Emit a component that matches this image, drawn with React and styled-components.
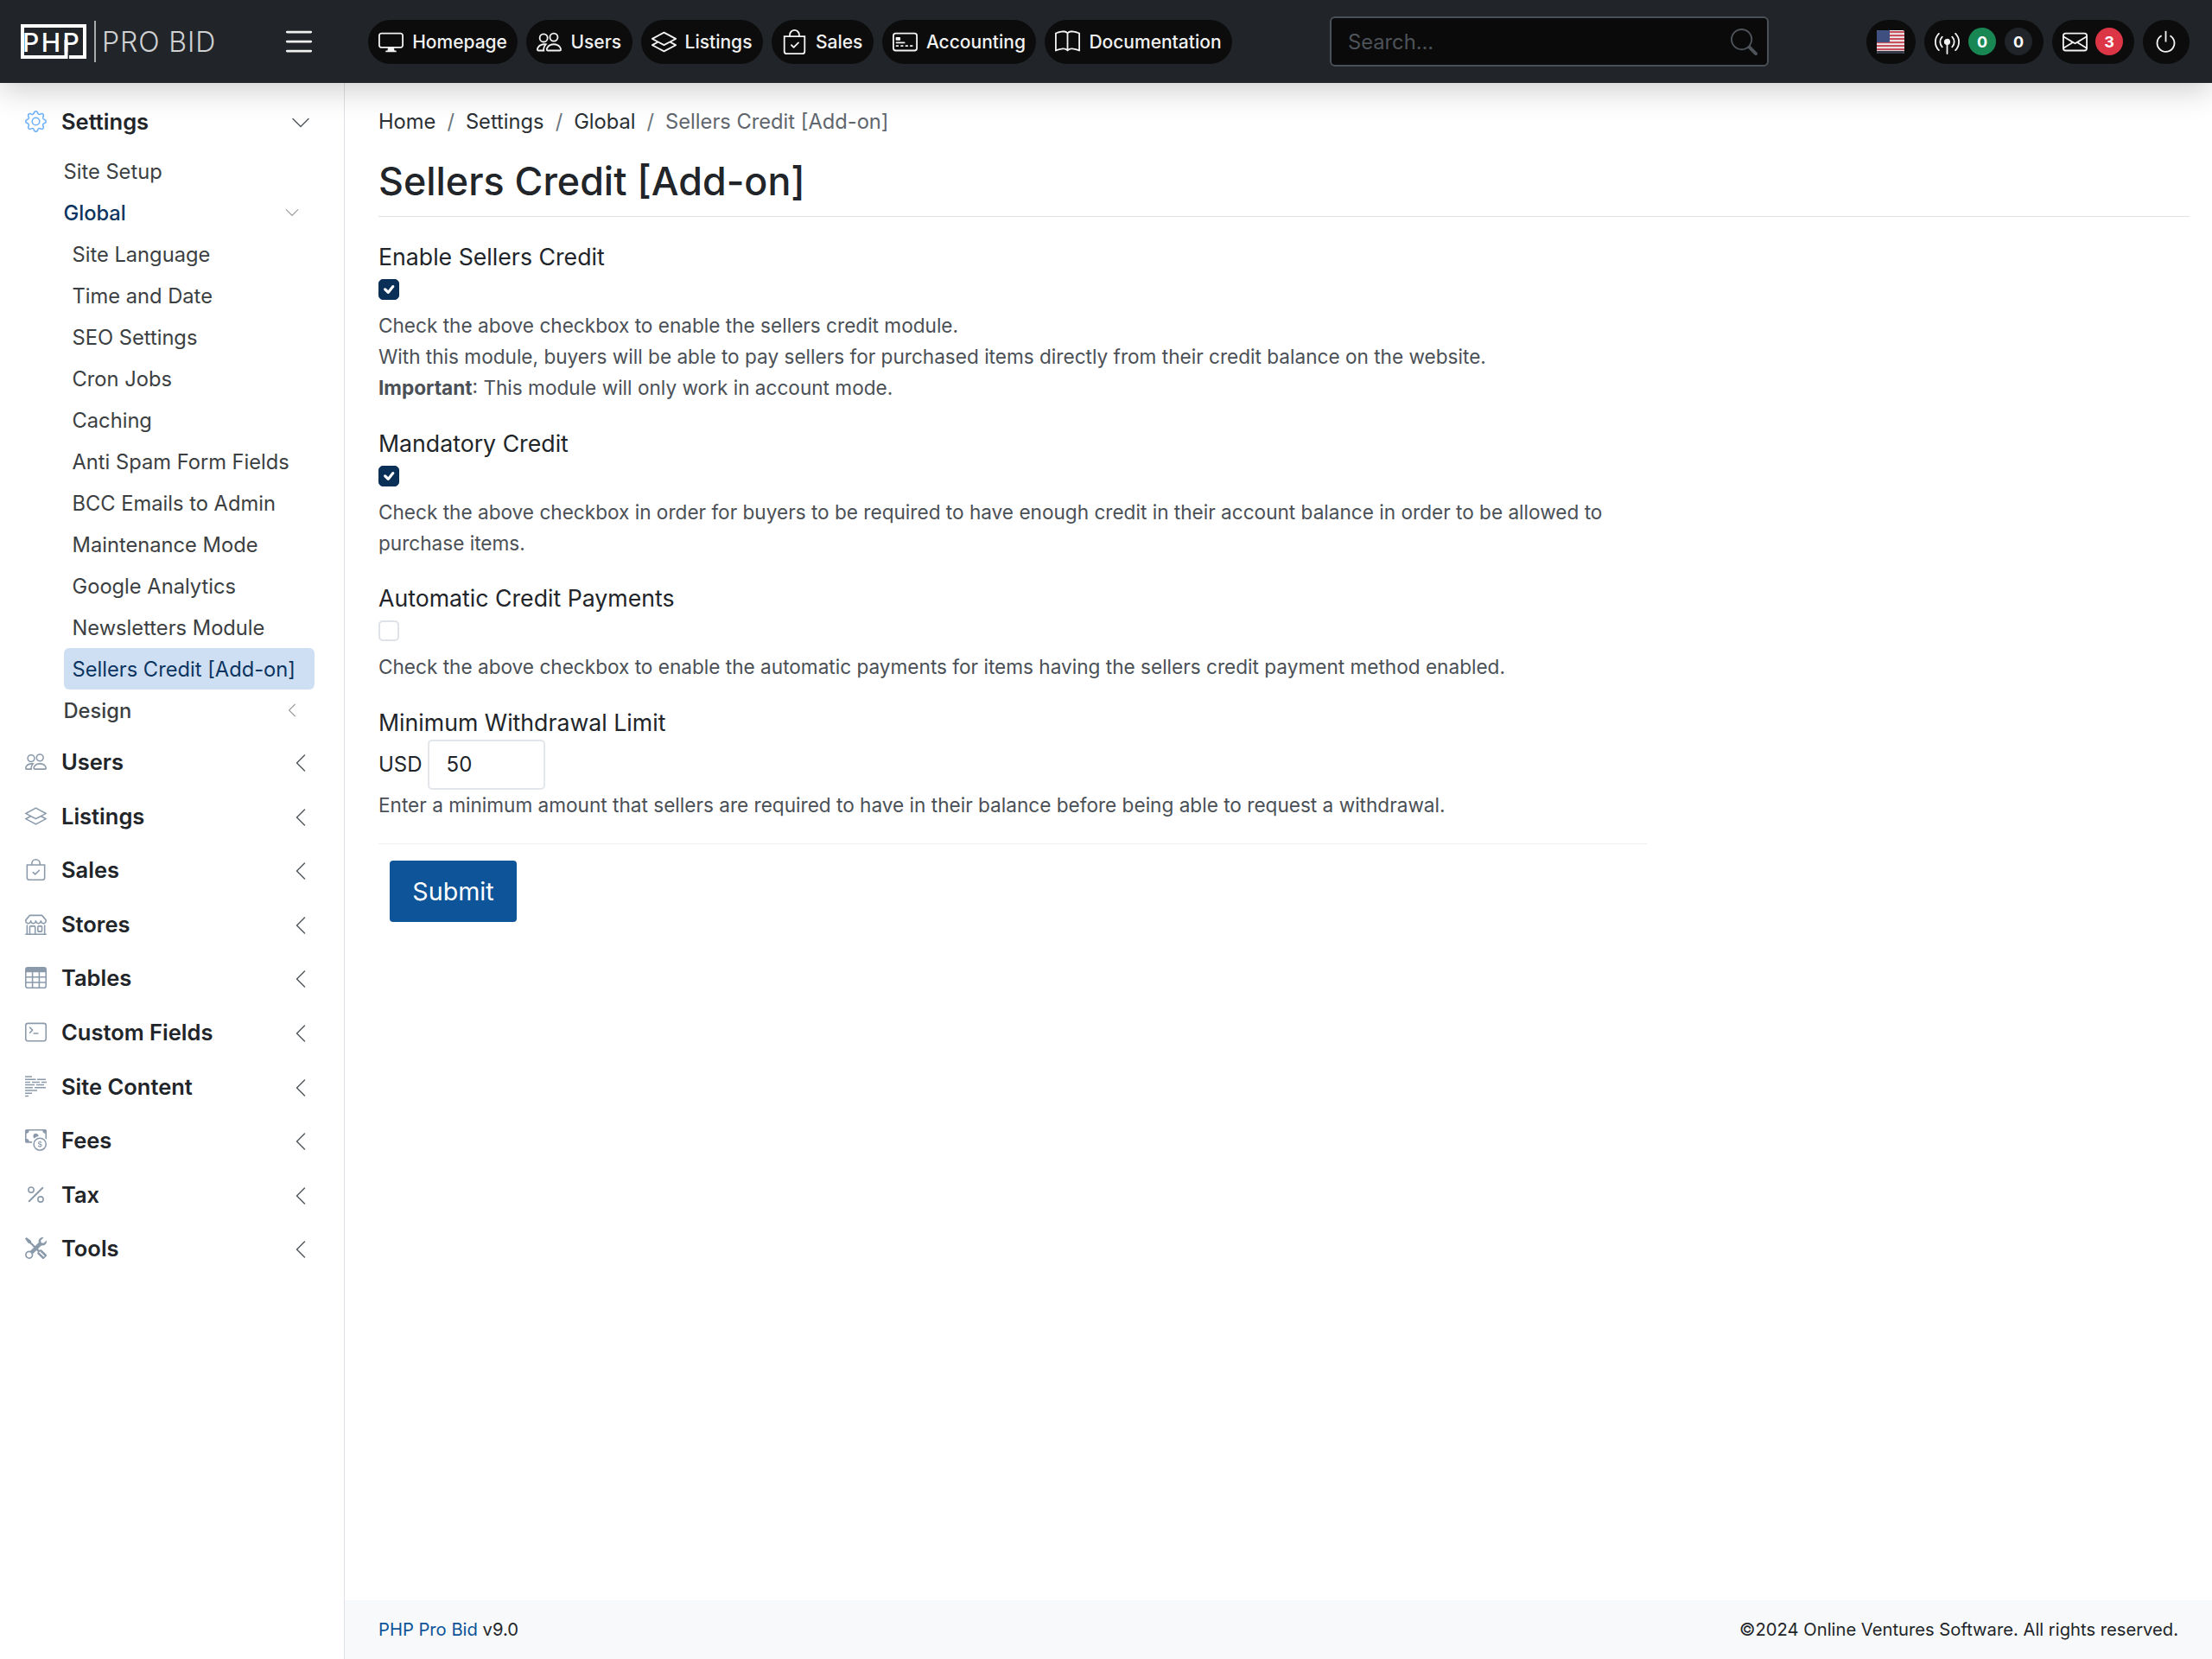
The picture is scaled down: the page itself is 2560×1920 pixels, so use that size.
import React from 'react';
import styled, { createGlobalStyle } from 'styled-components';
import {
  BsBagCheck,
  BsBook,
  BsBroadcastPin,
  BsCashCoin,
  BsCheck,
  BsChevronDown,
  BsChevronLeft,
  BsCreditCard2Front,
  BsDisplay,
  BsEnvelope,
  BsGear,
  BsLayers,
  BsList,
  BsPeople,
  BsPercent,
  BsPower,
  BsSearch,
  BsShop,
  BsTable,
  BsTerminal,
  BsTools,
} from 'react-icons/bs';

const GlobalStyle = createGlobalStyle`
  * { box-sizing: border-box; }
  html, body { margin: 0; padding: 0; background: #fff; }
  body {
    font-family: Inter, "Liberation Sans", sans-serif;
    color: #212529;
  }
`;

const Page = styled.div`
  display: flex;
  flex-direction: column;
  width: 2560px;
  height: 1920px;
  overflow: hidden;
`;

/* top bar */
const Header = styled.header`
  position: relative;
  z-index: 2;
  display: flex;
  align-items: center;
  flex: 0 0 96px;
  padding-left: 24px;
  background: #212529;
  box-shadow: 0 8px 36px rgba(0, 0, 0, 0.2);
  color: #fff;
`;

const Logo = styled.div`
  display: flex;
  flex: 0 0 226px;
  align-items: center;
`;

const LogoMark = styled.div`
  position: relative;
  flex: 0 0 76px;
  height: 40px;
  svg {
    position: absolute;
    left: 0;
    top: 0;
  }
`;

const LogoPhp = styled.span`
  position: absolute;
  left: 2px;
  top: 6px;
  font-size: 30px;
  line-height: 30px;
  font-weight: 500;
  letter-spacing: 2.5px;
`;

const LogoRule = styled.div`
  flex: 0 0 2px;
  height: 48px;
  margin: 0 7px 0 9px;
  background: #a9abad;
`;

const LogoText = styled.span`
  font-size: 32px;
  font-weight: 300;
  letter-spacing: 0.9px;
  white-space: nowrap;
  color: #cfd1d3;
`;

const Burger = styled.div`
  display: flex;
  flex: 0 0 44px;
  margin-left: 74px;
  margin-right: 58px;
  justify-content: center;
  color: #f1f1f1;
`;

const NavGroup = styled.nav`
  display: flex;
  flex-shrink: 0;
  gap: 10px;
`;

const Pill = styled.div`
  display: flex;
  align-items: center;
  height: 51px;
  gap: ${({ $gap }) => $gap || 10}px;
  padding: 0 ${({ $end }) => $end || 12.5}px 0 12px;
  border-radius: 26px;
  background: #0c0c0c;
  font-size: 21px;
  font-weight: 500;
  color: #f2f2f2;
  white-space: nowrap;
`;

const SearchBox = styled.div`
  display: flex;
  flex-shrink: 0;
  align-items: center;
  justify-content: space-between;
  width: 508px;
  height: 58px;
  margin-left: 113px;
  margin-right: 113px;
  padding: 0 11px 0 19px;
  background: #0a0a0a;
  border: 2px solid #495057;
  border-radius: 6px;
  color: #4d5359;
  font-size: 23.7px;
`;

const Badge = styled.span`
  display: flex;
  align-items: center;
  justify-content: center;
  width: 32px;
  height: 32px;
  border-radius: 50%;
  background: ${({ $bg }) => $bg};
  color: #fff;
  font-size: 18px;
  font-weight: 700;
`;

/* body */
const Body = styled.div`
  display: flex;
  flex: 1;
  min-height: 0;
`;

const Sidebar = styled.aside`
  flex: 0 0 399px;
  padding-top: 20px;
  border-right: 1px solid #dee2e6;
`;

const SideGroup = styled.div`
  margin-bottom: ${({ $open }) => ($open ? 11.6 : 14.6)}px;
`;

const SideRow = styled.div`
  display: flex;
  align-items: center;
  height: 48px;
  padding: 0 38px 0 29px;
  gap: 17px;
  font-size: 25.5px;
  font-weight: 600;
  color: #212529;
`;

const SideIcon = styled.span`
  display: flex;
  width: 25px;
  justify-content: center;
  color: ${({ $active }) => ($active ? '#6db1fb' : '#8b9aab')};
`;

const RowLabel = styled.span`
  flex: 1;
`;

const Chevron = styled.span`
  display: flex;
  margin-top: ${({ $sub }) => ($sub ? 0 : 3)}px;
  color: ${({ $sub }) => ($sub ? '#9a9a9a' : '#555b60')};
`;

const SubList = styled.div`
  margin: 10px 34px 0 73.5px;
`;

const SubRow = styled.div`
  display: flex;
  align-items: center;
  justify-content: space-between;
  height: 48px;
  padding-right: 17px;
  font-size: 23.7px;
  font-weight: ${({ $strong }) => ($strong ? 500 : 400)};
  color: ${({ $navy }) => ($navy ? '#0b3560' : '#3c3f42')};
`;

const LeafRow = styled.div`
  display: flex;
  align-items: center;
  height: 48px;
  padding-left: 10px;
  border-radius: 6px;
  font-size: 23.7px;
  background: ${({ $active }) => ($active ? '#cfdff3' : 'transparent')};
  color: ${({ $active }) => ($active ? '#0b3560' : '#3c3f42')};
`;

const Main = styled.main`
  display: flex;
  flex-direction: column;
  flex: 1;
  min-width: 0;
`;

const Content = styled.div`
  flex: 1;
  padding: 24px 26px 0 39px;
`;

const Crumbs = styled.div`
  display: flex;
  align-items: center;
  height: 40px;
  gap: 13px;
  font-size: 23.7px;
  color: #2b3035;
`;

const CrumbSep = styled.span`
  color: #6c757d;
`;

const CrumbCurrent = styled.span`
  color: #5f666d;
`;

const Title = styled.h1`
  margin: 21px 0 0;
  padding-bottom: 11px;
  border-bottom: 1px solid #dee2e6;
  font-size: 44.8px;
  line-height: 58px;
  font-weight: 500;
  color: #212529;
`;

const Form = styled.form`
  width: 1469px;
  padding-top: 26px;
`;

const Field = styled.div`
  margin-bottom: 25.5px;
`;

const FieldLabel = styled.div`
  font-size: 26.7px;
  line-height: 40px;
  color: #212529;
`;

const Box = styled.span`
  display: flex;
  align-items: center;
  justify-content: center;
  width: 24px;
  height: 24px;
  margin-top: 6px;
  border-radius: 5px;
  border: ${({ $on }) => ($on ? '1px solid #0b3058' : '2px solid #dfe2e6')};
  background: ${({ $on }) => ($on ? '#0b3058' : '#fff')};
  color: #fff;
`;

const Help = styled.p`
  margin: ${({ $flush }) => ($flush ? 0 : '12px')} 0 0;
  font-size: 22.6px;
  line-height: 36px;
  color: #4a5056;
  b {
    font-weight: 700;
  }
`;

const AmountRow = styled.div`
  display: flex;
  align-items: center;
  gap: 6px;
  font-size: 24px;
  color: #212529;
`;

const AmountInput = styled.div`
  display: flex;
  align-items: center;
  width: 136px;
  height: 58px;
  padding-left: 20px;
  border: 2px solid #e3e6ea;
  border-radius: 5px;
`;

const Divider = styled.hr`
  margin: 26.5px 0 19px;
  border: 0;
  border-top: 1px solid #f0f1f2;
`;

const Submit = styled.button`
  display: block;
  width: 147px;
  height: 71px;
  margin-left: 13px;
  border: 0;
  border-radius: 4px;
  background: #0d5499;
  color: #fff;
  font-family: inherit;
  font-size: 28.7px;
`;

const Footer = styled.footer`
  display: flex;
  align-items: center;
  justify-content: space-between;
  height: 68px;
  padding: 0 39px 2px;
  background: #f8f9fa;
  font-size: 20.2px;
  color: #212529;
`;

const FooterLink = styled.span`
  color: #0d5499;
`;

const FlagFrame = styled.svg`
  display: block;
  border-radius: 2px;
`;

const navItems = [
  { label: 'Homepage', Icon: BsDisplay },
  { label: 'Users', Icon: BsPeople },
  { label: 'Listings', Icon: BsLayers },
  { label: 'Sales', Icon: BsBagCheck },
  { label: 'Accounting', Icon: BsCreditCard2Front },
  { label: 'Documentation', Icon: BsBook },
];

const globalItems = [
  'Site Language',
  'Time and Date',
  'SEO Settings',
  'Cron Jobs',
  'Caching',
  'Anti Spam Form Fields',
  'BCC Emails to Admin',
  'Maintenance Mode',
  'Google Analytics',
  'Newsletters Module',
];

const SiteContentIcon = ({ size }) => (
  <svg width={size} height={size} viewBox="0 0 25 25" fill="none" stroke="currentColor" strokeWidth="1.5">
    <path d="M0 1h8M0 4.2h12.5M14 4.2h10M0 7.4h6M8 7.4h9M19 7.4h6M0 10.6h11M13 10.6h9M0 13.8h9M11 13.8h13M0 17h14M0 20.2h8M0 23.4h4" />
  </svg>
);

const sideItems = [
  { label: 'Users', Icon: BsPeople },
  { label: 'Listings', Icon: BsLayers },
  { label: 'Sales', Icon: BsBagCheck },
  { label: 'Stores', Icon: BsShop },
  { label: 'Tables', Icon: BsTable },
  { label: 'Custom Fields', Icon: BsTerminal },
  { label: 'Site Content', Icon: SiteContentIcon },
  { label: 'Fees', Icon: BsCashCoin },
  { label: 'Tax', Icon: BsPercent },
  { label: 'Tools', Icon: BsTools },
];

const UsFlag = () => (
  <FlagFrame width="32" height="27" viewBox="0 0 32 27">
    <rect width="32" height="27" fill="#eee" />
    {[0, 4, 8, 12, 16, 20].map((y) => (
      <rect key={y} y={y + 1} width="32" height="2.2" fill="#c8505e" />
    ))}
    <rect width="15" height="14" fill="#3f4f7f" />
    <rect y="24" width="32" height="3" fill="#343a4a" />
  </FlagFrame>
);

const Check = () => <BsCheck size={24} strokeWidth={0.8} />;

export default function App() {
  return (
    <Page>
      <GlobalStyle />
      <Header>
        <Logo>
          <LogoMark>
            <svg width="76" height="40" viewBox="0 0 76 40" fill="none" stroke="#fff" strokeWidth="4">
              <path d="M0 2H74V38H56M2 2V38H52.5V18" />
            </svg>
            <LogoPhp>PHP</LogoPhp>
          </LogoMark>
          <LogoRule />
          <LogoText>PRO BID</LogoText>
        </Logo>
        <Burger>
          <BsList size={44} />
        </Burger>
        <NavGroup>
          {navItems.map(({ label, Icon }) => (
            <Pill key={label}>
              <Icon size={29} />
              {label}
            </Pill>
          ))}
        </NavGroup>
        <SearchBox>
          Search...
          <BsSearch size={31} />
        </SearchBox>
        <NavGroup>
          <Pill $end={13}>
            <UsFlag />
          </Pill>
          <Pill $end={13} $gap={10}>
            <BsBroadcastPin size={29} />
            <Badge $bg="#198754">0</Badge>
            <Badge $bg="#212529">0</Badge>
          </Pill>
          <Pill $end={13} $gap={9}>
            <BsEnvelope size={29} />
            <Badge $bg="#dc3545">3</Badge>
          </Pill>
          <Pill $end={13}>
            <BsPower size={29} />
          </Pill>
        </NavGroup>
      </Header>
      <Body>
        <Sidebar>
          <SideGroup $open>
            <SideRow>
              <SideIcon $active>
                <BsGear size={25} />
              </SideIcon>
              <RowLabel>Settings</RowLabel>
              <Chevron>
                <BsChevronDown size={24} />
              </Chevron>
            </SideRow>
            <SubList>
              <SubRow>Site Setup</SubRow>
              <SubRow $strong $navy>
                Global
                <Chevron $sub>
                  <BsChevronDown size={18} />
                </Chevron>
              </SubRow>
              {globalItems.map((item) => (
                <LeafRow key={item}>{item}</LeafRow>
              ))}
              <LeafRow $active>Sellers Credit [Add-on]</LeafRow>
              <SubRow $strong>
                Design
                <Chevron $sub>
                  <BsChevronLeft size={18} />
                </Chevron>
              </SubRow>
            </SubList>
          </SideGroup>
          {sideItems.map(({ label, Icon }) => (
            <SideGroup key={label}>
              <SideRow>
                <SideIcon>
                  <Icon size={25} />
                </SideIcon>
                <RowLabel>{label}</RowLabel>
                <Chevron>
                  <BsChevronLeft size={24} />
                </Chevron>
              </SideRow>
            </SideGroup>
          ))}
        </Sidebar>
        <Main>
          <Content>
            <Crumbs>
              <span>Home</span>
              <CrumbSep>/</CrumbSep>
              <span>Settings</span>
              <CrumbSep>/</CrumbSep>
              <span>Global</span>
              <CrumbSep>/</CrumbSep>
              <CrumbCurrent>Sellers Credit [Add-on]</CrumbCurrent>
            </Crumbs>
            <Title>Sellers Credit [Add-on]</Title>
            <Form>
              <Field>
                <FieldLabel>Enable Sellers Credit</FieldLabel>
                <Box $on>
                  <Check />
                </Box>
                <Help>
                  Check the above checkbox to enable the sellers credit module.
                  <br />
                  With this module, buyers will be able to pay sellers for purchased items directly from their credit balance on the website.
                  <br />
                  <b>Important</b>: This module will only work in account mode.
                </Help>
              </Field>
              <Field>
                <FieldLabel>Mandatory Credit</FieldLabel>
                <Box $on>
                  <Check />
                </Box>
                <Help>
                  Check the above checkbox in order for buyers to be required to have enough credit in their account balance in order to be allowed to purchase items.
                </Help>
              </Field>
              <Field>
                <FieldLabel>Automatic Credit Payments</FieldLabel>
                <Box />
                <Help>
                  Check the above checkbox to enable the automatic payments for items having the sellers credit payment method enabled.
                </Help>
              </Field>
              <div>
                <FieldLabel>Minimum Withdrawal Limit</FieldLabel>
                <AmountRow>
                  USD
                  <AmountInput>50</AmountInput>
                </AmountRow>
                <Help $flush>
                  Enter a minimum amount that sellers are required to have in their balance before being able to request a withdrawal.
                </Help>
              </div>
              <Divider />
              <Submit type="button">Submit</Submit>
            </Form>
          </Content>
          <Footer>
            <span>
              <FooterLink>PHP Pro Bid</FooterLink> v9.0
            </span>
            <span>©2024 Online Ventures Software. All rights reserved.</span>
          </Footer>
        </Main>
      </Body>
    </Page>
  );
}
